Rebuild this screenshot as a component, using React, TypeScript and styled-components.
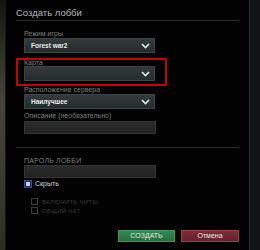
import * as React from 'react';
import styled, { createGlobalStyle } from 'styled-components';

const GlobalStyle = createGlobalStyle`
  *, *::before, *::after {
    box-sizing: border-box;
  }
  html, body {
    margin: 0;
    padding: 0;
    width: 260px;
    height: 250px;
    overflow: hidden;
    background-color: #000000;
    font-family: "Liberation Sans", "DejaVu Sans", sans-serif;
  }
`;

const Screen = styled.div`
  width: 260px;
  height: 250px;
  display: flex;
`;

const LeftStrip = styled.div`
  width: 6px;
  background: linear-gradient(180deg, #141410 0%, #2a2920 16%, #46443a 40%, #3c3b31 70%, #2e2d25 100%);
  border-right: 1px solid #161614;
`;

const RightStrip = styled.div`
  width: 11px;
  background-color: #111414;
  border-left: 1px solid #262b2b;
`;

const Panel = styled.div`
  flex: 1;
  padding: 0 10px;
  display: flex;
  flex-direction: column;
  background-color: #020202;
`;

const Title = styled.div`
  height: 21px;
  line-height: 26px;
  font-size: 9.5px;
  color: #b8bcbc;
  border-bottom: 1px solid #2a2c2c;
`;

const Field = styled.div<{ $highlight?: boolean; $top?: number }>`
  display: flex;
  flex-direction: column;
  align-items: flex-start;
  margin-top: ${(p) => p.$top ?? 0}px;
  padding: ${(p) => (p.$highlight ? '0 10px 3px 6px' : '0 8px')};
  border: ${(p) => (p.$highlight ? '2px solid #c8000a' : 'none')};
  width: ${(p) => (p.$highlight ? '151px' : 'auto')};
`;

const Label = styled.div<{ $short?: boolean }>`
  height: ${(p) => (p.$short ? '6px' : '8px')};
  line-height: ${(p) => (p.$short ? '6px' : '8px')};
  font-size: 7px;
  color: #7c8080;
  white-space: nowrap;
`;

const Select = styled.div`
  width: 131px;
  height: 15px;
  display: flex;
  align-items: center;
  justify-content: space-between;
  padding-left: 6px;
  background: linear-gradient(180deg, #343a3a 0%, #262b2b 100%);
  border: 1px solid #3d4444;
  color: #e8ecec;
  font-size: 6.5px;
  font-weight: bold;
`;

const Chevron = styled.svg`
  width: 9px;
  height: 6px;
  margin-right: 4px;
`;

const TextInput = styled.div`
  width: 132px;
  height: 13px;
  margin-top: 1px;
  background: linear-gradient(180deg, #2c2c2c 0%, #222222 100%);
  border: 1px solid #343434;
`;

const Divider = styled.div`
  height: 1px;
  background-color: #2a2c2c;
  margin-top: 13px;
`;

const UpperLabel = styled(Label)`
  text-transform: uppercase;
  letter-spacing: 0.2px;
`;

const CheckRow = styled.div<{ $disabled?: boolean; $top?: number }>`
  display: flex;
  align-items: center;
  gap: ${(p) => (p.$disabled ? '4px' : '3px')};
  height: 9px;
  margin-top: ${(p) => p.$top ?? 0}px;
  margin-left: ${(p) => (p.$disabled ? '7px' : '0')};
  font-size: ${(p) => (p.$disabled ? '6px' : '7px')};
  color: ${(p) => (p.$disabled ? '#3a3c3c' : '#d0d4d4')};
  text-transform: ${(p) => (p.$disabled ? 'uppercase' : 'none')};
  letter-spacing: ${(p) => (p.$disabled ? '0.3px' : '0')};
  white-space: nowrap;
`;

const Box = styled.div<{ $checked?: boolean }>`
  width: ${(p) => (p.$checked ? '8px' : '7px')};
  height: ${(p) => (p.$checked ? '8px' : '7px')};
  border: 1px solid ${(p) => (p.$checked ? '#3c4ca8' : '#3a3c3c')};
  background-color: ${(p) => (p.$checked ? '#c6dce4' : 'transparent')};
  box-shadow: ${(p) => (p.$checked ? 'inset 0 0 0 1px #1a2260' : 'none')};
`;

const Footer = styled.div`
  margin-top: 15px;
  display: flex;
  justify-content: flex-end;
  gap: 6px;
`;

const Button = styled.div<{ $tone: 'green' | 'red' }>`
  width: ${(p) => (p.$tone === 'green' ? '57px' : '58px')};
  height: 12px;
  line-height: 10px;
  text-align: center;
  font-size: 7px;
  color: #e6e6e6;
  border: 1px solid ${(p) => (p.$tone === 'green' ? '#3e9a5c' : '#9a3e4c')};
  background: ${(p) =>
    p.$tone === 'green'
      ? 'linear-gradient(180deg, #348a50 0%, #256e3c 100%)'
      : 'linear-gradient(180deg, #7e2c3a 0%, #66222e 100%)'};
`;

const ChevronIcon = () => (
  <Chevron viewBox="0 0 9 6">
    <polyline points="1,1 4.5,4.5 8,1" fill="none" stroke="#e8ecec" strokeWidth="1.6" />
  </Chevron>
);

export default function App() {
  return (
    <>
      <GlobalStyle />
      <Screen>
        <LeftStrip />
        <Panel>
          <Title>Создать лобби</Title>
          <Field $top={9}>
            <Label>Режим игры</Label>
            <Select>
              Forest war2
              <ChevronIcon />
            </Select>
          </Field>
          <Field $highlight $top={5}>
            <Label $short>Карта</Label>
            <Select>
              <span />
              <ChevronIcon />
            </Select>
          </Field>
          <Field>
            <Label>Расположение сервера</Label>
            <Select>
              Наилучшее
              <ChevronIcon />
            </Select>
          </Field>
          <Field $top={3}>
            <Label>Описание (необязательно)</Label>
            <TextInput />
          </Field>
          <Divider />
          <Field $top={9}>
            <UpperLabel>Пароль лобби</UpperLabel>
            <TextInput style={{ marginTop: 0 }} />
            <CheckRow $top={1}>
              <Box $checked />
              Скрыть
            </CheckRow>
            <CheckRow $disabled $top={9}>
              <Box />
              Включить читы
            </CheckRow>
            <CheckRow $disabled>
              <Box />
              Общий чат
            </CheckRow>
          </Field>
          <Footer>
            <Button $tone="green">СОЗДАТЬ</Button>
            <Button $tone="red">Отмена</Button>
          </Footer>
        </Panel>
        <RightStrip />
      </Screen>
    </>
  );
}
